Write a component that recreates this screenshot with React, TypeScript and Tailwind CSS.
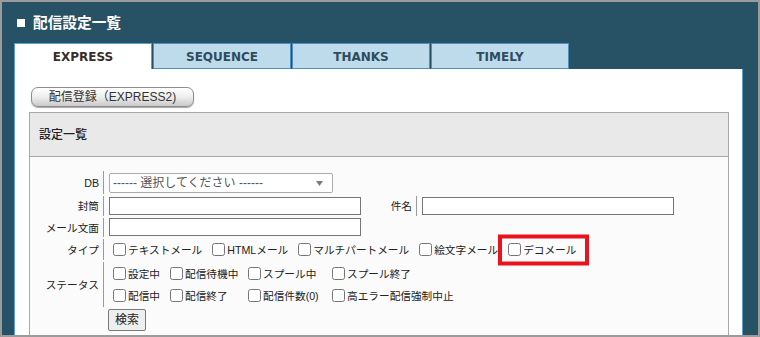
import React from 'react';

const tabs = ['EXPRESS', 'SEQUENCE', 'THANKS', 'TIMELY'];

const typeItems = ['テキストメール', 'HTMLメール', 'マルチパートメール', '絵文字メール'];

const statusRows = [
  ['設定中', '配信待機中', 'スプール中', 'スプール終了'],
  ['配信中', '配信終了', '配信件数(0)', '高エラー配信強制中止'],
];

const Check: React.FC<{ label: string }> = ({ label }) => (
  <label className="flex items-center">
    <input type="checkbox" className="m-0 ml-[4px] w-[13px] h-[13px]" />
    <span className="ml-[2px]">{label}</span>
  </label>
);

const Label: React.FC<{ text: string; w?: string }> = ({ text, w = 'w-[74px]' }) => (
  <div className={`${w} self-stretch flex items-center justify-end pr-[4px] border-r border-[#9a9a9a] shrink-0`}>
    {text}
  </div>
);

const App: React.FC = () => {
  return (
    <div className="w-[760px] h-[337px] border-2 border-[#9b9b9b] bg-[#275164] overflow-hidden font-['Liberation_Sans','Noto_Sans_CJK_JP',sans-serif] text-[#222]">
      {/* title */}
      <div className="h-[41px] flex items-center pl-[15px] text-white">
        <span className="w-[8px] h-[8px] bg-white"></span>
        <span className="ml-[8px] text-[14.67px] font-bold">配信設定一覧</span>
      </div>

      {/* tabs */}
      <div className="ml-[12px] flex gap-[1px] h-[26px]">
        {tabs.map((t, i) => (
          <div
            key={t}
            className={
              i === 0
                ? "w-[138px] h-[26px] pt-[1px] bg-white border border-b-0 border-[#5b9fcf] flex items-center justify-center font-['DejaVu_Sans',sans-serif] font-bold text-[12px] text-[#3a2e28]"
                : "w-[138px] h-[26px] pt-[1px] bg-[#bddbeb] border border-[#4d8fbf] flex items-center justify-center font-['DejaVu_Sans',sans-serif] font-bold text-[12px] text-[#2f4b5d]"
            }
          >
            {t}
          </div>
        ))}
      </div>

      {/* panel */}
      <div className="ml-[12px] w-[729px] h-[270px] bg-white border-l border-r border-[#5ba2d2] pt-[18px]">
        <button className="block ml-[16px] w-[163px] h-[20px] rounded-[7px] border border-[#8d8d8d] bg-linear-to-b from-white via-[#eeeeee] to-[#c9c9c9] shadow-[0_1px_1px_rgba(0,0,0,0.35)] text-[12px] text-[#333] leading-none">
          配信登録（EXPRESS2)
        </button>

        <div className="ml-[14px] mt-[5px] w-[700px] border border-[#a9a9a9] bg-[#fbfbfb]">
          <div className="h-[44px] bg-[#e9e9e9] border-b border-[#a9a9a9] flex items-center pl-[9px] text-[12px] font-medium text-[#222]">
            設定一覧
          </div>

          <div className="pt-[14px] text-[10.67px] flex flex-col gap-[2px] h-[180px]">
            {/* DB */}
            <div className="flex h-[23px]">
              <Label text="DB" />
              <div className="pl-[5px] pt-[2px]">
                <div className="w-[224px] h-[20px] border border-[#aaaaaa] rounded-[2px] bg-white flex items-center justify-between pl-[3px] pr-[9px] text-[12px] text-[#555]">
                  <span>------ 選択してください ------</span>
                  <svg width="7" height="5" viewBox="0 0 7 5">
                    <path d="M0 0h7L3.5 5z" fill="#7a7a7a" />
                  </svg>
                </div>
              </div>
            </div>

            {/* 封筒 / 件名 */}
            <div className="flex h-[20px]">
              <Label text="封筒" />
              <div className="pl-[5px] flex items-center">
                <div className="w-[252px] h-[18px] border border-[#767676] bg-white"></div>
              </div>
              <Label text="件名" w="w-[56px]" />
              <div className="pl-[5px] flex items-center">
                <div className="w-[252px] h-[18px] border border-[#767676] bg-white"></div>
              </div>
            </div>

            {/* メール文面 */}
            <div className="flex h-[19px]">
              <Label text="メール文面" />
              <div className="pl-[5px]">
                <div className="w-[252px] h-[18px] border border-[#767676] bg-white"></div>
              </div>
            </div>

            {/* タイプ */}
            <div className="flex h-[21px]">
              <Label text="タイプ" />
              <div className="pl-[5px] flex items-center">
                {typeItems.map((t) => (
                  <div key={t} className="mr-[6px]">
                    <Check label={t} />
                  </div>
                ))}
                <div className="relative">
                  <Check label="デコメール" />
                  <span className="absolute left-[-6px] top-1/2 -translate-y-1/2 w-[91px] h-[31px] border-4 border-[#e8141d]"></span>
                </div>
              </div>
            </div>

            {/* ステータス */}
            <div className="flex h-[45px]">
              <Label text="ステータス" />
              <div className="pl-[5px] flex flex-col justify-center">
                {statusRows.map((row, r) => (
                  <div key={r} className="grid grid-cols-[57px_78px_84px_auto] h-[22px] items-center">
                    {row.map((s) => (
                      <Check key={s} label={s} />
                    ))}
                  </div>
                ))}
              </div>
            </div>

            <div className="pl-[78px]">
              <button className="block w-[38px] h-[22px] border border-[#7a7a7a] rounded-[2px] bg-[#efefef] text-[12px] text-[#222] leading-none">
                検索
              </button>
            </div>
          </div>
        </div>
      </div>
    </div>
  );
};

export default App;
